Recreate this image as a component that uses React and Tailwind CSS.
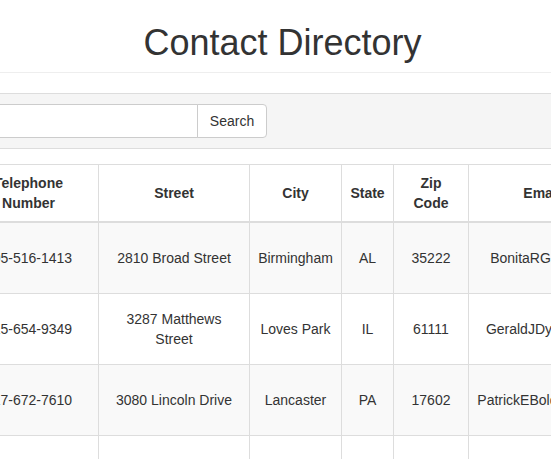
import React from "react";

const contacts = [
  {
    phone: "205-516-1413",
    street: "2810 Broad Street",
    city: "Birmingham",
    state: "AL",
    zip: "35222",
    email: "BonitaRGill@me",
  },
  {
    phone: "815-654-9349",
    street: (
      <>
        3287 Matthews
        <br />
        Street
      </>
    ),
    city: "Loves Park",
    state: "IL",
    zip: "61111",
    email: "GeraldJDyer@me",
  },
  {
    phone: "717-672-7610",
    street: "3080 Lincoln Drive",
    city: "Lancaster",
    state: "PA",
    zip: "17602",
    email: "PatrickEBolden@me",
  },
  {
    phone: "512-874-3390",
    street: "4471 Oak Avenue",
    city: "Austin",
    state: "TX",
    zip: "78701",
    email: "DianaMWalker@me",
  },
];

const App = () => {
  return (
    <div className="w-full min-h-screen overflow-hidden bg-white text-[14px] text-[#333] font-['Liberation_Sans',Arial,sans-serif]">
      <h1 className="pt-[23px] pl-[14px] text-center text-[36px] leading-[40px] font-normal">
        Contact Directory
      </h1>
      <div className="mt-[9px] border-t border-[#eee]" />

      {/* search bar */}
      <div className="mt-[20px] border-y border-[#ddd] bg-[#f5f5f5] py-[10px]">
        <div className="flex">
          <input
            type="text"
            className="ml-[-43px] h-[34px] w-[241px] border border-[#ccc] bg-white px-3 outline-none"
          />
          <button className="ml-[-1px] h-[34px] w-[70px] rounded-r-[4px] border border-[#ccc] bg-white text-center text-[#333]">
            Search
          </button>
        </div>
      </div>

      {/* table */}
      <table className="mt-[15px] ml-[-42px] w-[657px] min-w-[657px] table-fixed border-collapse text-center">
        <colgroup>
          <col className="w-[140px]" />
          <col className="w-[151px]" />
          <col className="w-[92px]" />
          <col className="w-[52px]" />
          <col className="w-[75px]" />
          <col className="w-[147px]" />
        </colgroup>
        <thead>
          <tr>
            <th className="border border-b-2 border-[#ddd] p-[8px] align-middle font-bold leading-[20px]">
              Telephone
              <br />
              Number
            </th>
            <th className="border border-b-2 border-[#ddd] p-[8px] align-middle font-bold leading-[20px]">
              Street
            </th>
            <th className="border border-b-2 border-[#ddd] p-[8px] align-middle font-bold leading-[20px]">
              City
            </th>
            <th className="border border-b-2 border-[#ddd] p-[8px] align-middle font-bold leading-[20px]">
              State
            </th>
            <th className="border border-b-2 border-[#ddd] p-[8px] align-middle font-bold leading-[20px]">
              Zip
              <br />
              Code
            </th>
            <th className="border border-b-2 border-[#ddd] p-[8px] align-middle font-bold leading-[20px]">
              Email
            </th>
          </tr>
        </thead>
        <tbody>
          {contacts.map((c, index) => (
            <tr
              key={index}
              className={index % 2 === 0 ? "bg-[#f9f9f9]" : "bg-white"}
            >
              <td className="h-[71px] border border-[#ddd] px-[8px] align-middle leading-[20px]">
                {c.phone}
              </td>
              <td className="h-[71px] border border-[#ddd] px-[8px] align-middle leading-[20px]">
                {c.street}
              </td>
              <td className="h-[71px] border border-[#ddd] px-[8px] align-middle leading-[20px]">
                {c.city}
              </td>
              <td className="h-[71px] border border-[#ddd] px-[8px] align-middle leading-[20px]">
                {c.state}
              </td>
              <td className="h-[71px] border border-[#ddd] px-[8px] align-middle leading-[20px]">
                {c.zip}
              </td>
              <td className="h-[71px] whitespace-nowrap border border-[#ddd] px-[8px] align-middle leading-[20px]">
                {c.email}
              </td>
            </tr>
          ))}
        </tbody>
      </table>
    </div>
  );
};

export default App;
